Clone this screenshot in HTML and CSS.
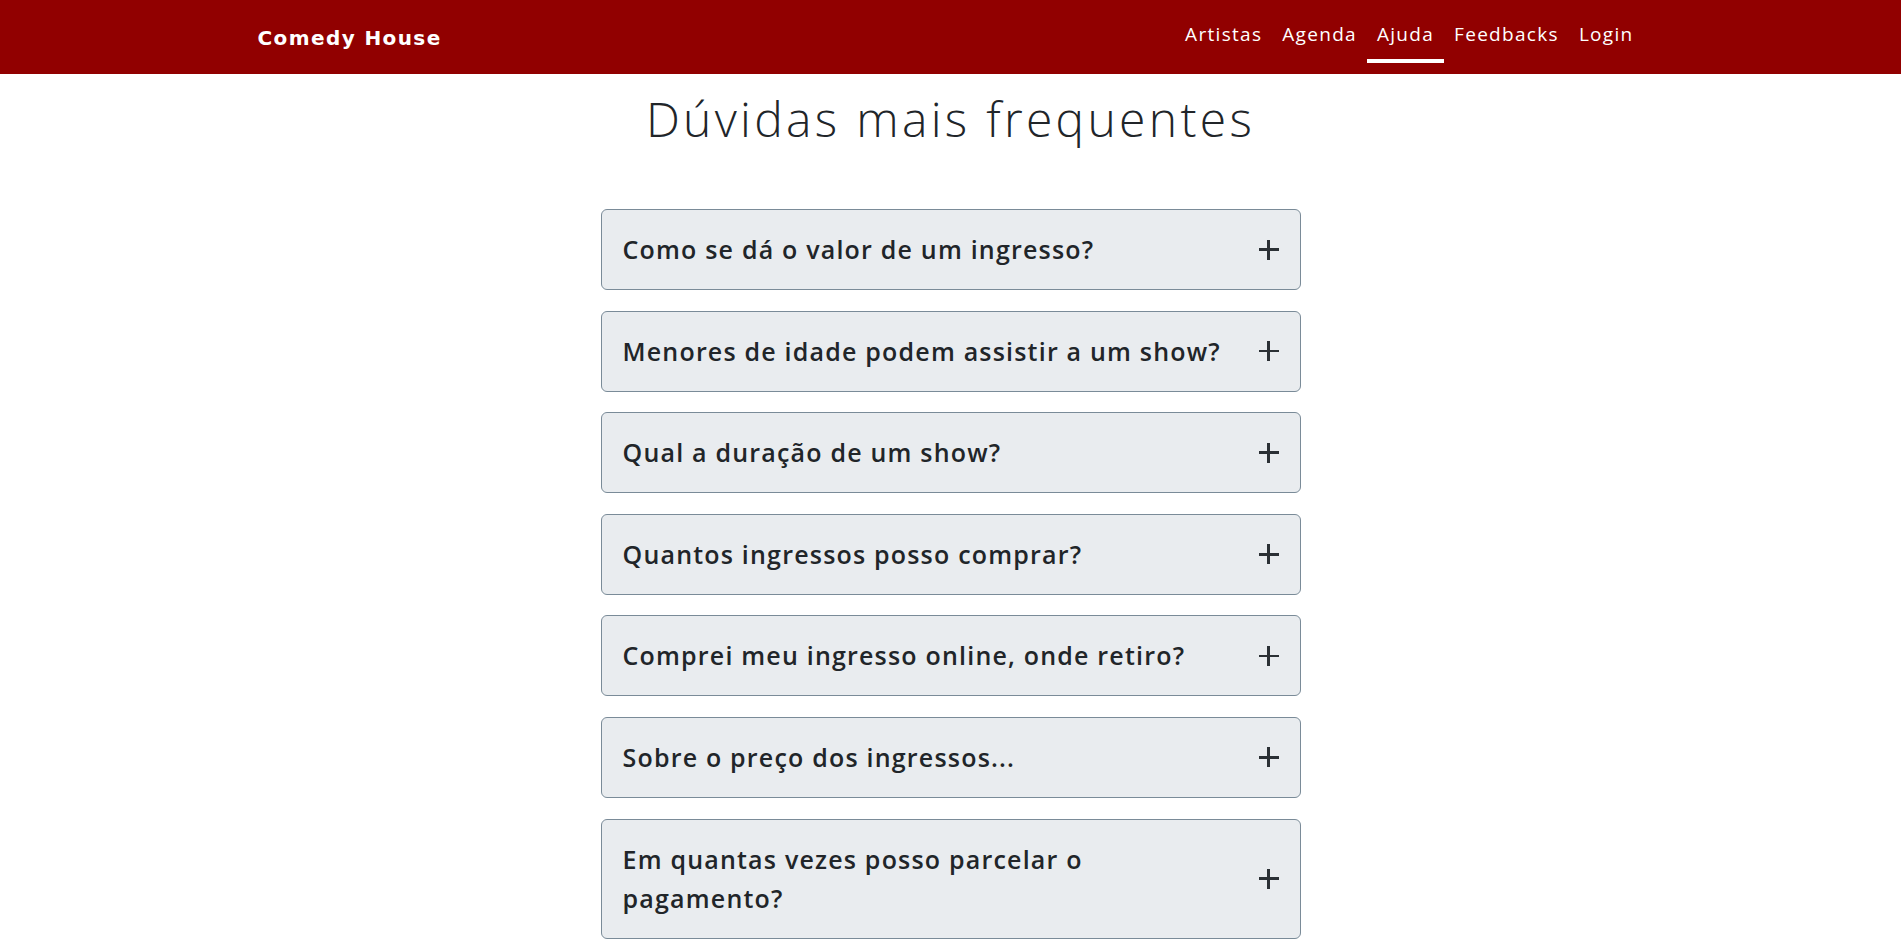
FILE: index.html
```html
<!DOCTYPE html>
<html lang="pt-BR">
<head>
<meta charset="utf-8">
<title>Comedy House - Ajuda</title>
<link rel="stylesheet" href="styles.css">
</head>
<body>
<header class="topbar">
  <div class="topbar-inner">
    <a class="brand" href="#">Comedy House</a>
    <nav class="nav">
      <a class="nav-link" href="#">Artistas</a>
      <a class="nav-link" href="#">Agenda</a>
      <a class="nav-link active" href="#">Ajuda</a>
      <a class="nav-link" href="#">Feedbacks</a>
      <a class="nav-link" href="#">Login</a>
    </nav>
  </div>
</header>
<main class="faq">
  <h1 class="faq-title">Dúvidas mais frequentes</h1>
  <div class="accordion">
    <div class="acc-item"><button class="acc-btn"><span class="acc-q">Como se dá o valor de um ingresso?</span><span class="plus"></span></button></div>
    <div class="acc-item"><button class="acc-btn"><span class="acc-q">Menores de idade podem assistir a um show?</span><span class="plus"></span></button></div>
    <div class="acc-item"><button class="acc-btn"><span class="acc-q">Qual a duração de um show?</span><span class="plus"></span></button></div>
    <div class="acc-item"><button class="acc-btn"><span class="acc-q">Quantos ingressos posso comprar?</span><span class="plus"></span></button></div>
    <div class="acc-item"><button class="acc-btn"><span class="acc-q">Comprei meu ingresso online, onde retiro?</span><span class="plus"></span></button></div>
    <div class="acc-item"><button class="acc-btn"><span class="acc-q">Sobre o preço dos ingressos...</span><span class="plus"></span></button></div>
    <div class="acc-item"><button class="acc-btn"><span class="acc-q">Em quantas vezes posso parcelar o pagamento?</span><span class="plus"></span></button></div>
  </div>
</main>
</body>
</html>
```
FILE: styles.css
```css
* { box-sizing: border-box; }
html, body { margin: 0; padding: 0; }
body {
  font-family: "Open Sans", "Liberation Sans", sans-serif;
  color: #212529;
  background: #fff;
}
.topbar {
  background: #910000;
  height: 74px;
}
.topbar-inner {
  width: 1386px;
  margin: 0 auto;
  height: 74px;
  display: flex;
  justify-content: space-between;
  align-items: center;
}
.brand {
  color: #fff;
  text-decoration: none;
  font-family: "DejaVu Sans", sans-serif;
  font-weight: bold;
  font-size: 20px;
  letter-spacing: 1.4px;
  margin-top: 2px;
}
.nav {
  display: flex;
  align-self: flex-start;
}
.nav-link {
  color: #fff;
  text-decoration: none;
  font-size: 19px;
  line-height: 28px;
  letter-spacing: 1.3px;
  padding: 20px 10px 11px;
  border-bottom: 4px solid transparent;
}
.nav-link.active { border-bottom-color: #fff; }
.faq {
  width: 700px;
  margin: 0 auto;
}
.faq-title {
  margin: 16px 0 61px;
  text-align: center;
  font-weight: 300;
  font-size: 48px;
  line-height: 58px;
  letter-spacing: 3.3px;
}
.acc-item {
  border: 1px solid #7a8b98;
  border-radius: 6px;
  background: #e9ecef;
  margin-bottom: 20.6px;
}
.acc-btn {
  width: 100%;
  display: flex;
  align-items: center;
  padding: 20px 21px;
  border: 0;
  background: transparent;
  font-family: inherit;
  color: #212529;
  text-align: left;
  cursor: pointer;
}
.acc-q {
  flex: 1;
  max-width: 612px;
  font-size: 25px;
  font-weight: 600;
  line-height: 39px;
  letter-spacing: 1.2px;
}
.plus {
  margin-left: auto;
  width: 20px;
  height: 20px;
  flex-shrink: 0;
  position: relative;
}
.plus::before, .plus::after {
  content: "";
  position: absolute;
  background: #2b3035;
}
.plus::before { left: 0; right: 0; top: 8.75px; height: 2.5px; }
.plus::after { top: 0; bottom: 0; left: 8.75px; width: 2.5px; }
```
